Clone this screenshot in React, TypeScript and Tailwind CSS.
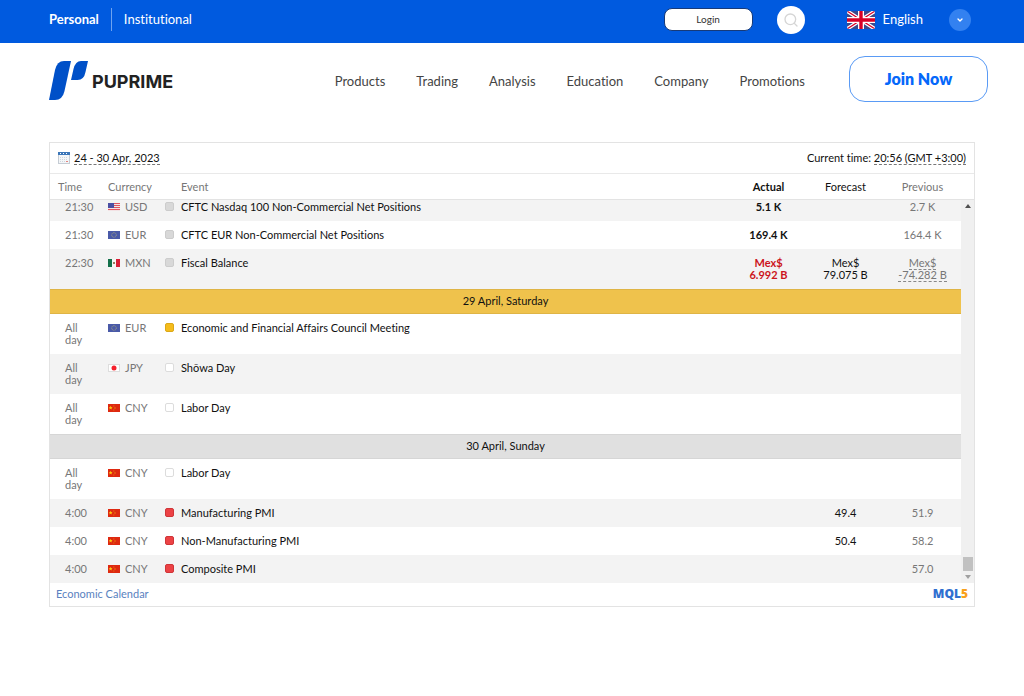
import React from 'react';
import { ChevronDown, Search } from 'lucide-react';

type FlagCode = 'USD' | 'EUR' | 'MXN' | 'JPY' | 'CNY';
type Importance = 'none' | 'low' | 'medium' | 'high';

interface CalendarEvent {
  time: string;
  currency: FlagCode;
  importance: Importance;
  name: string;
  actual?: string;
  forecast?: string;
  previous?: string;
  negative?: boolean;
  revised?: boolean;
}

interface CalendarDay {
  title?: string;
  today?: boolean;
  events: CalendarEvent[];
}

const navItems = ['Products', 'Trading', 'Analysis', 'Education', 'Company', 'Promotions'];

const days: CalendarDay[] = [
  {
    events: [
      { time: '21:30', currency: 'USD', importance: 'low', name: 'CFTC Nasdaq 100 Non-Commercial Net Positions', actual: '5.1 K', previous: '2.7 K' },
      { time: '21:30', currency: 'EUR', importance: 'low', name: 'CFTC EUR Non-Commercial Net Positions', actual: '169.4 K', previous: '164.4 K' },
      { time: '22:30', currency: 'MXN', importance: 'low', name: 'Fiscal Balance', actual: 'Mex$ 6.992 B', forecast: 'Mex$ 79.075 B', previous: 'Mex$ -74.282 B', negative: true, revised: true },
    ],
  },
  {
    title: '29 April, Saturday',
    today: true,
    events: [
      { time: 'All day', currency: 'EUR', importance: 'medium', name: 'Economic and Financial Affairs Council Meeting' },
      { time: 'All day', currency: 'JPY', importance: 'none', name: 'Shōwa Day' },
      { time: 'All day', currency: 'CNY', importance: 'none', name: 'Labor Day' },
    ],
  },
  {
    title: '30 April, Sunday',
    events: [
      { time: 'All day', currency: 'CNY', importance: 'none', name: 'Labor Day' },
      { time: '4:00', currency: 'CNY', importance: 'high', name: 'Manufacturing PMI', forecast: '49.4', previous: '51.9' },
      { time: '4:00', currency: 'CNY', importance: 'high', name: 'Non-Manufacturing PMI', forecast: '50.4', previous: '58.2' },
      { time: '4:00', currency: 'CNY', importance: 'high', name: 'Composite PMI', previous: '57.0' },
    ],
  },
];

const importanceColors: Record<Importance, string> = {
  none: 'bg-white border-[#dcdcdc]',
  low: 'bg-[#d8d8d8] border-[#cccccc]',
  medium: 'bg-[#f5bc1c] border-[#dba818]',
  high: 'bg-[#ec4245] border-[#cf3538]',
};

const Flag = ({ code }: { code: FlagCode }) => (
  <svg viewBox="0 0 12 8" className="h-2 w-3 shrink-0" aria-hidden="true">
    {code === 'USD' && (
      <>
        <rect width="12" height="8" fill="#f3e3e5" />
        {[0, 2, 4, 6].map((y) => (
          <rect key={y} y={y} width="12" height="1" fill="#e0555f" />
        ))}
        <rect width="6" height="5" fill="#4a4fa3" />
      </>
    )}
    {code === 'EUR' && (
      <>
        <rect width="12" height="8" fill="#4a5aa8" />
        <circle cx="6" cy="4" r="2.3" fill="none" stroke="#a9a67c" strokeWidth="0.9" strokeDasharray="0.9 0.55" />
      </>
    )}
    {code === 'MXN' && (
      <>
        <rect width="12" height="8" fill="#f6f6f4" />
        <rect width="4" height="8" fill="#13704a" />
        <rect x="8" width="4" height="8" fill="#d91f37" />
        <rect x="5" y="3" width="2" height="2" fill="#9a7b5c" />
      </>
    )}
    {code === 'JPY' && (
      <>
        <rect x="0.5" y="0.5" width="11" height="7" fill="#ffffff" stroke="#dddddd" />
        <circle cx="6" cy="4" r="2.5" fill="#f5222d" />
      </>
    )}
    {code === 'CNY' && (
      <>
        <rect width="12" height="8" fill="#de2910" />
        <path d="M2.6 1.8l.6 1.3 1.4.1-1.1.9.4 1.4-1.3-.8-1.2.8.3-1.4L.8 3.2l1.3-.1z" fill="#fbc70e" />
        <path d="M5.4 1.5h.9v.9h-.9zM6.6 3h.8v2h-.8zM5.4 5.5h.9v.9h-.9z" fill="#e88a12" />
      </>
    )}
  </svg>
);

const UkFlag = () => (
  <svg viewBox="0 0 28 18" className="h-[18px] w-7 rounded-xs" aria-hidden="true">
    <rect width="28" height="18" fill="#3b4a8c" />
    <path d="M0 0l28 18M28 0L0 18" stroke="#ffffff" strokeWidth="3.6" />
    <path d="M0 0l28 18M28 0L0 18" stroke="#d80027" strokeWidth="1.2" />
    <path d="M14 0v18M0 9h28" stroke="#ffffff" strokeWidth="6" />
    <path d="M14 0v18M0 9h28" stroke="#d80027" strokeWidth="3.4" />
  </svg>
);

const Logo = () => (
  <a href="#home" className="flex items-center gap-1" aria-label="PUPRIME">
    <svg viewBox="0 0 39 39" className="h-[39px] w-[39px]" aria-hidden="true">
      <path d="M15 0H22L15.500 30Q13.500 39 6 39H0L6 9Q8 0 15 0Z" fill="#0050c8" />
      <path d="M32 0H39L36.500 11Q35 19 28.500 19H22L24.500 8Q26.500 0 32 0Z" fill="#0050c8" />
    </svg>
    <span className="pt-0.5 font-['Inter',sans-serif] text-lg font-bold text-[#222222]">PUPRIME</span>
  </a>
);

const CalendarIcon = () => (
  <svg viewBox="0 0 12 12" className="h-3 w-3" aria-hidden="true">
    <rect x="0.5" y="0.5" width="11" height="11" fill="#f4f6f8" stroke="#c5ccd4" />
    <rect width="12" height="3" fill="#3b76b8" />
    <path d="M2 1.500h1M5 1.500h1M8 1.500h1" stroke="#ffffff" />
    <path d="M2 5.500h8M2 7.500h8M2 9.500h5" stroke="#cfd6dd" strokeDasharray="1 1" />
    <path d="M8 9.500h2" stroke="#e2837d" />
  </svg>
);

const Mql5Logo = () => (
  <a href="#mql5" className="flex font-['Open_Sans',sans-serif] text-xs leading-4 font-extrabold" aria-label="MQL5">
    <span className="text-[#2f6fd0]">MQL</span>
    <span className="text-[#f9a11b]">5</span>
  </a>
);

const TopBar = () => (
  <div className="flex h-[43px] items-center bg-[#005adf] pr-[53px] pb-1 pl-[49px] text-[13px] text-white">
    <a href="#personal" className="border-r border-[#6ea3f0] py-0.5 pr-3 font-bold">Personal</a>
    <a href="#institutional" className="pl-3">Institutional</a>
    <button className="ml-auto h-[23px] w-[89px] rounded-lg border border-[#173a78] bg-white text-[10px] text-[#333333]">
      Login
    </button>
    <button aria-label="Search" className="ml-6 flex size-7 items-center justify-center rounded-full bg-white">
      <Search className="size-4 text-[#d5d5d5]" strokeWidth={2} />
    </button>
    <div className="ml-[42px] flex items-center gap-2">
      <UkFlag />
      <span>English</span>
    </div>
    <button aria-label="Choose language" className="ml-[26px] flex size-[22px] items-center justify-center rounded-full bg-[#3381f0]">
      <ChevronDown className="size-2" strokeWidth={4} />
    </button>
  </div>
);

const Header = () => (
  <header className="flex h-[75px] items-center pr-9 pl-[49px]">
    <Logo />
    <nav className="ml-auto flex gap-[31px] pt-0.5 pr-11 text-[13px] text-[#444444]">
      {navItems.map((item) => (
        <a key={item} href={`#${item.toLowerCase()}`}>{item}</a>
      ))}
    </nav>
    <button className="mb-1 h-[46px] w-[139px] rounded-2xl border border-[#5a9bf5] text-base font-extrabold text-[#0568fa]">
      Join Now
    </button>
  </header>
);

const EventRow = ({ event, striped, clipped }: { event: CalendarEvent; striped: boolean; clipped: boolean }) => (
  <tr className={`align-top ${striped ? 'bg-[#f3f3f3]' : 'bg-white'} ${clipped ? '*:pt-px' : '*:pt-2'} *:pb-2`}>
    <td className="pr-4 pl-[15px] text-[#777777]">{event.time}</td>
    <td className="text-[#777777]">
      <span className="flex items-center gap-[5px]">
        <Flag code={event.currency} />
        {event.currency}
      </span>
    </td>
    <td>
      <span className="flex items-center gap-[7px]">
        <span className={`size-[9px] rounded-xs border ${importanceColors[event.importance]}`} />
        <a href="#event">{event.name}</a>
      </span>
    </td>
    <td className={`px-3 text-center font-bold ${event.negative ? 'text-[#cc1420]' : ''}`}>{event.actual}</td>
    <td className="px-3 text-center">{event.forecast}</td>
    <td className="px-3 text-center text-[#777777]">
      <span className={event.revised ? 'border-b border-dashed border-[#888888]' : ''}>{event.previous}</span>
    </td>
  </tr>
);

const EconomicCalendar = () => (
  <section className="border border-[#e3e3e3] text-[11px] leading-3 text-[#111111]">
    <div className="flex h-[31px] items-center justify-between border-b border-[#e9e9e9] px-2">
      <div className="flex items-center gap-1">
        <CalendarIcon />
        <button className="border-b border-dashed border-[#777777]">24 - 30 Apr, 2023</button>
      </div>
      <div>
        Current time: <button className="border-b border-dashed border-[#777777]">20:56 (GMT +3:00)</button>
      </div>
    </div>

    <div className="flex">
      <div className="min-w-0 grow">
        <table className="w-full table-fixed">
          <colgroup>
            <col className="w-[58px]" />
            <col className="w-[57px]" />
            <col />
            <col className="w-[77px]" />
            <col className="w-[77px]" />
            <col className="w-[77px]" />
          </colgroup>
          <thead>
            <tr className="h-[25px] border-b border-[#e3e3e3] *:pt-0.5 *:font-normal">
              <th className="pl-2 text-left text-[#777777]">Time</th>
              <th className="text-left text-[#777777]">Currency</th>
              <th className="pl-4 text-left text-[#777777]">Event</th>
              <th><b>Actual</b></th>
              <th>Forecast</th>
              <th className="text-[#777777]">Previous</th>
            </tr>
          </thead>
          {days.map((day, dayIndex) => (
            <tbody key={dayIndex}>
              {day.title && (
                <tr className={`h-6 border-y ${day.today ? 'border-[#dfb445] bg-[#efc24c]' : 'border-[#d6d6d6] bg-[#e0e0e0]'}`}>
                  <th colSpan={6} className="font-normal">{day.title}</th>
                </tr>
              )}
              {day.events.map((event, index) => (
                <EventRow
                  key={index}
                  event={event}
                  striped={index % 2 === (day.title ? 1 : 0)}
                  clipped={dayIndex === 0 && index === 0}
                />
              ))}
            </tbody>
          ))}
        </table>
      </div>

      {/* Scrollbar */}
      <div className="flex w-[13px] shrink-0 flex-col" aria-hidden="true">
        <div className="h-[26px] border-b border-[#e3e3e3]" />
        <div className="flex grow flex-col items-center justify-between bg-[#f0f0f0] py-1">
          <svg viewBox="0 0 6 4" className="h-1 w-1.5"><path d="M0 4L3 0l3 4z" fill="#505050" /></svg>
          <div className="flex flex-col items-center gap-1">
            <div className="h-3.5 w-2.5 bg-[#c1c1c1]" />
            <svg viewBox="0 0 6 4" className="h-1 w-1.5"><path d="M0 0l3 4 3-4z" fill="#a0a0a0" /></svg>
          </div>
        </div>
      </div>
    </div>

    <div className="flex h-[23px] items-center justify-between px-1.5">
      <a href="#calendar" className="text-[#5a82c0]">Economic Calendar</a>
      <Mql5Logo />
    </div>
  </section>
);

export default function App() {
  return (
    <div className="min-h-screen bg-white font-['Lato',sans-serif] [font-variant-ligatures:none]">
      <TopBar />
      <Header />
      <main className="px-[49px] pt-6">
        <EconomicCalendar />
      </main>
    </div>
  );
}
